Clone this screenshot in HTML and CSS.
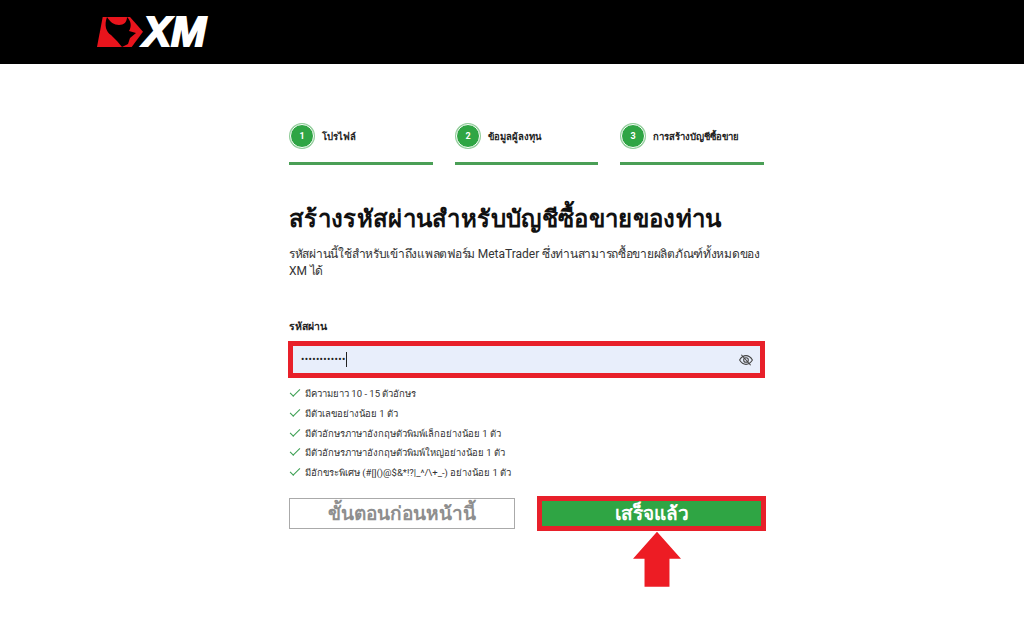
FILE: index.html
```html
<!DOCTYPE html>
<html lang="th">
    <head>
    <meta charset="utf-8">
    <title>XM</title>
    <link rel="stylesheet" href="styles.css">
    </head>
    <body>
    <header class="top">
        <div class="logo">
            <svg class="bull" width="46" height="30" viewBox="0 0 46 30">
                <path fill="#e8141c" d="M5.700 0H33L46 14.700L34.700 30H0Z"/>
                <path fill="#000" d="M10 0C7 8 9 15 14 18L20 24L25 30L31 27L33 21L39 16L32 14C35 9 34 4 30 0C30 5 27 8 22 8C17 8 13 5 10 0Z"/>
            </svg>
            <span class="logo-text">XM</span>
        </div>
    </header>
    <main class="wrap">
        <div class="steps">
            <div class="step">
                <div class="step-head"><span class="num">1</span><span class="step-name">โปรไฟล์</span></div>
            </div>
            <div class="step">
                <div class="step-head"><span class="num">2</span><span class="step-name">ข้อมูลผู้ลงทุน</span></div>
            </div>
            <div class="step">
                <div class="step-head"><span class="num">3</span><span class="step-name">การสร้างบัญชีซื้อขาย</span></div>
            </div>
        </div>

        <h1>สร้างรหัสผ่านสำหรับบัญชีซื้อขายของท่าน</h1>
        <p class="intro">รหัสผ่านนี้ใช้สำหรับเข้าถึงแพลตฟอร์ม <span class="latin">MetaTrader</span> ซึ่งท่านสามารถซื้อขายผลิตภัณฑ์ทั้งหมดของ <span class="latin">XM</span> ได้</p>

        <label class="field-label">รหัสผ่าน</label>
        <div class="field">
            <span class="dots">••••••••••••</span><span class="caret"></span>
            <svg class="eye" width="14" height="14" viewBox="0 0 24 24" fill="none" stroke="#444" stroke-width="1.8">
                <path d="M1 12C4 7 8 4.500 12 4.500S20 7 23 12C20 17 16 19.500 12 19.500S4 17 1 12Z"/>
                <circle cx="12" cy="12" r="4"/>
                <path d="M4 3L20 21"/>
            </svg>
        </div>

        <ul class="rules">
            <li>มีความยาว 10 - 15 ตัวอักษร</li>
            <li>มีตัวเลขอย่างน้อย 1 ตัว</li>
            <li>มีตัวอักษรภาษาอังกฤษตัวพิมพ์เล็กอย่างน้อย 1 ตัว</li>
            <li>มีตัวอักษรภาษาอังกฤษตัวพิมพ์ใหญ่อย่างน้อย 1 ตัว</li>
            <li>มีอักขระพิเศษ (#[]()@$&amp;*!?|_^/\+_-) อย่างน้อย 1 ตัว</li>
        </ul>

        <div class="buttons">
            <a class="btn-back">ขั้นตอนก่อนหน้านี้</a>
            <div class="btn-next-box">
                <a class="btn-next">เสร็จแล้ว</a>
                <div class="pointer"></div>
            </div>
        </div>
    </main>
    </body>
</html>
```

FILE: styles.css
```css
body {
    margin: 0;
    padding: 0;
    background: #fff;
    color: #222;
    font-family: Roboto, "Noto Sans", "Liberation Sans", sans-serif;
}
.top {
    height: 64px;
    background: #000;
    padding-left: 97px;
}
.logo {
    display: flex;
    align-items: center;
    padding-top: 17px;
}
.bull {
    display: block;
}
.logo-text {
    color: #fff;
    font-family: "Liberation Sans", sans-serif;
    font-size: 42px;
    font-weight: bold;
    font-style: italic;
    line-height: 30px;
    -webkit-text-stroke: 2px #fff;
}
.wrap {
    width: 475px;
    margin-left: 289px;
    padding-top: 60px;
}
.steps {
    display: grid;
    grid-template-columns: 144px 143px 144px;
    gap: 22px;
}
.step {
    height: 38px;
    border-bottom: 3px solid #4a9f56;
}
.step-head {
    display: flex;
    align-items: center;
    gap: 8px;
}
.num {
    width: 22px;
    height: 22px;
    border-radius: 50%;
    background: #2fa544;
    border: 1px solid #fff;
    box-shadow: 0 0 0 1px #8fcc98;
    color: #fff;
    font-size: 9px;
    font-weight: bold;
    line-height: 22px;
    text-align: center;
    margin-left: 1px;
}
.step-name {
    font-size: 9.5px;
    font-weight: bold;
    color: #222;
}
h1 {
    margin: 39px 0 0;
    font-size: 24px;
    line-height: 30px;
    font-weight: bold;
    color: #111;
    letter-spacing: 0.35px;
    white-space: nowrap;
}
.intro {
    margin: 12px 0 0;
    font-size: 12px;
    line-height: 17px;
    color: #333;
    letter-spacing: -0.27px;
}
.latin {
    letter-spacing: 0;
}
.field-label {
    display: block;
    margin-top: 40px;
    font-size: 10.5px;
    font-weight: bold;
    line-height: 14px;
}
.field {
    display: flex;
    align-items: center;
    width: 477px;
    height: 37px;
    box-sizing: border-box;
    margin: 7px 0 0 -1px;
    padding: 0 7px 0 8px;
    background: #e8eefb;
    border: 5px solid #e8202a;
}
.dots {
    font-size: 10px;
    letter-spacing: 0.35px;
    color: #222;
}
.caret {
    width: 1px;
    height: 15px;
    background: #222;
}
.eye {
    margin-left: auto;
}
.rules {
    list-style: none;
    margin: 6px 0 0;
    padding: 0;
}
.rules li {
    position: relative;
    padding-left: 16px;
    font-size: 9.5px;
    line-height: 19.75px;
    color: #333;
}
.rules li::before {
    content: "";
    position: absolute;
    left: 1px;
    top: 5px;
    width: 9px;
    height: 4px;
    border-left: 1.5px solid #3a9e50;
    border-bottom: 1.5px solid #3a9e50;
    transform: rotate(-45deg);
}
.buttons {
    display: flex;
    align-items: flex-start;
    gap: 22px;
    margin-top: 13px;
}
.btn-back {
    flex: none;
    width: 226px;
    height: 31px;
    margin-top: 2px;
    box-sizing: border-box;
    border: 1px solid #aaa;
    color: #8e8e8e;
    font-size: 19px;
    font-weight: bold;
    line-height: 29px;
    text-align: center;
}
.btn-next-box {
    flex: none;
    width: 229px;
}
.btn-next {
    display: block;
    height: 35px;
    box-sizing: border-box;
    background: #2fa544;
    border: 5px solid #e8202a;
    color: #fff;
    font-size: 19px;
    font-weight: bold;
    line-height: 25px;
    text-align: center;
}
.pointer {
    width: 48px;
    height: 55px;
    margin: 1px 0 0 96px;
    background: #ed1c24;
    clip-path: polygon(50% 0, 100% 49%, 76% 49%, 76% 100%, 24% 100%, 24% 49%, 0 49%);
}
```
